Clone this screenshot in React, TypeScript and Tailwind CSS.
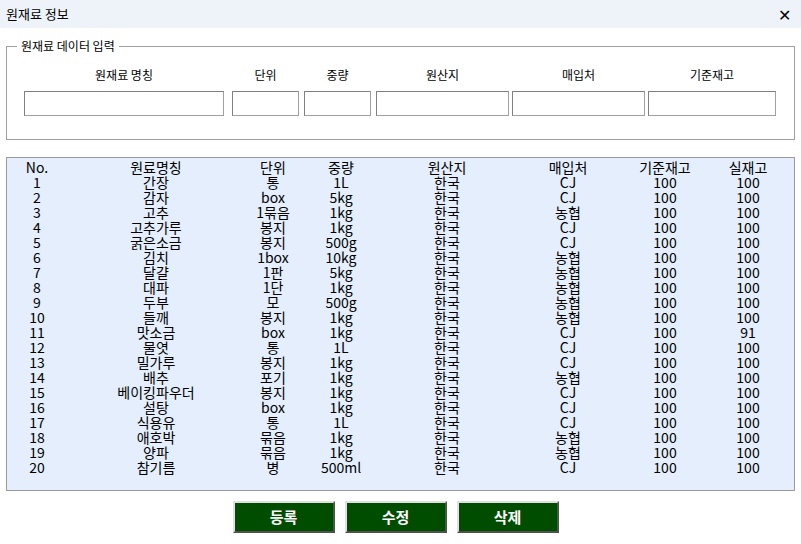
import React from 'react';

const rows: string[][] = [
  ['1', '간장', '통', '1L', '한국', 'CJ', '100', '100'],
  ['2', '감자', 'box', '5kg', '한국', 'CJ', '100', '100'],
  ['3', '고추', '1묶음', '1kg', '한국', '농협', '100', '100'],
  ['4', '고추가루', '봉지', '1kg', '한국', 'CJ', '100', '100'],
  ['5', '굵은소금', '봉지', '500g', '한국', 'CJ', '100', '100'],
  ['6', '김치', '1box', '10kg', '한국', '농협', '100', '100'],
  ['7', '달걀', '1판', '5kg', '한국', '농협', '100', '100'],
  ['8', '대파', '1단', '1kg', '한국', '농협', '100', '100'],
  ['9', '두부', '모', '500g', '한국', '농협', '100', '100'],
  ['10', '들깨', '봉지', '1kg', '한국', '농협', '100', '100'],
  ['11', '맛소금', 'box', '1kg', '한국', 'CJ', '100', '91'],
  ['12', '물엿', '통', '1L', '한국', 'CJ', '100', '100'],
  ['13', '밀가루', '봉지', '1kg', '한국', 'CJ', '100', '100'],
  ['14', '배추', '포기', '1kg', '한국', '농협', '100', '100'],
  ['15', '베이킹파우더', '봉지', '1kg', '한국', 'CJ', '100', '100'],
  ['16', '설탕', 'box', '1kg', '한국', 'CJ', '100', '100'],
  ['17', '식용유', '통', '1L', '한국', 'CJ', '100', '100'],
  ['18', '애호박', '묶음', '1kg', '한국', '농협', '100', '100'],
  ['19', '양파', '묶음', '1kg', '한국', '농협', '100', '100'],
  ['20', '참기름', '병', '500ml', '한국', 'CJ', '100', '100'],
];

const header = ['No.', '원료명칭', '단위', '중량', '원산지', '매입처', '기준재고', '실재고'];
const cols = 'grid grid-cols-[60px_178px_56px_80px_132px_110px_84px_82px]';

const fields = [
  { label: '원재료 명칭', w: 'w-[200px] ml-0' },
  { label: '단위', w: 'w-[67px] ml-[8px]' },
  { label: '중량', w: 'w-[67px] ml-[5px]' },
  { label: '원산지', w: 'w-[133px] ml-[5px]' },
  { label: '매입처', w: 'w-[133px] ml-[3px]' },
  { label: '기준재고', w: 'w-[128px] ml-[3px]' },
];

const App: React.FC = () => {
  return (
    <div className="w-[801px] h-[544px] bg-white overflow-hidden text-black" style={{ fontFamily: '"Noto Sans CJK KR", "Liberation Sans", sans-serif' }}>
      <div className="h-[28px] bg-[#eef3f9] flex items-center justify-between pl-[6px] pr-[10px] text-[13px]">
        <span>원재료 정보</span>
        <span className="text-[16px] leading-none">✕</span>
      </div>

      <div className="relative mx-[6px] mt-[18px] h-[94px] border border-[#a0a0a0]">
        <span className="absolute -top-[10px] left-[10px] bg-white px-[4px] text-[12px] leading-[18px]">원재료 데이터 입력</span>
        <div className="flex pl-[17px] pt-[20px]">
          {fields.map((f) => (
            <div key={f.label} className={`${f.w} flex flex-col items-center`}>
              <span className="text-[12px] leading-[16px]">{f.label}</span>
              <div className="mt-[8px] w-full h-[25px] border border-[#a0a0a0] border-t-[#808080] border-l-[#808080] bg-white" />
            </div>
          ))}
        </div>
      </div>

      <div className="mx-[6px] mt-[17px] h-[334px] border border-[#9a9a9a] bg-[#e4eefc] pt-[2px] text-[14px] leading-[15px]">
        <div className={`${cols} text-center`}>
          {header.map((h) => <span key={h}>{h}</span>)}
        </div>
        {rows.map((r) => (
          <div key={r[0]} className={`${cols} text-center`}>
            {r.map((c, i) => <span key={i}>{c}</span>)}
          </div>
        ))}
      </div>

      <div className="flex justify-center gap-[10px] mt-[10px] pr-[10px]">
        {['등록', '수정', '삭제'].map((b) => (
          <button key={b} className="w-[102px] h-[32px] bg-[#004d00] text-white text-[15px] font-bold border-2 border-t-[#e0e0e0] border-l-[#e0e0e0] border-r-[#505050] border-b-[#505050]">
            {b}
          </button>
        ))}
      </div>
    </div>
  );
};

export default App;
